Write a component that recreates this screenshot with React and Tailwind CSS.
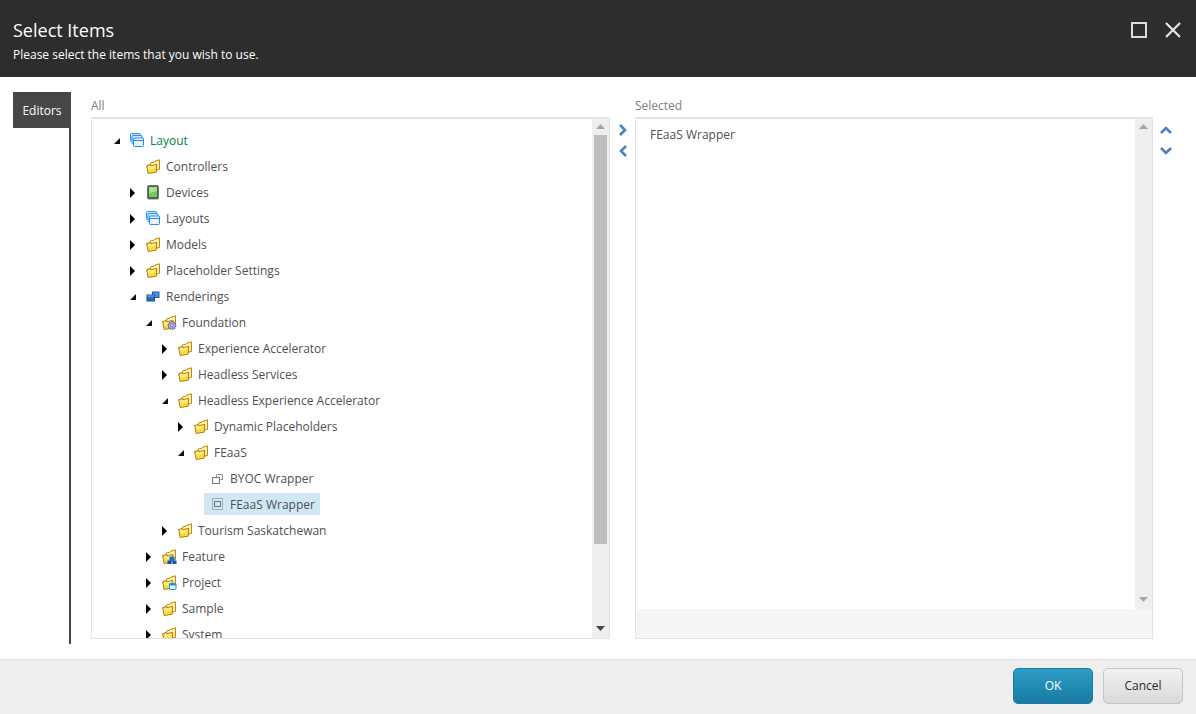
import React from 'react';

// small 16x16 tree icons
function FolderIcon({ children }) {
  return (
    <svg viewBox="0 0 16 16" className="w-4 h-4 shrink-0">
      <path d="M4.5 10V4L8 3.2 9 2 13.5 .8V10.5L5 12Z" fill="#ffec80" stroke="#b98a1e" />
      <path d="M5.5 4.6 12.5 2.4V9.5L5.5 11Z" fill="#fff6b8" />
      <path d="M.6 6.6 4 5.6 5 6.6 10.8 5.4 10.2 13.2 2.2 14.5Z" fill="#ffd93c" stroke="#a97c14" strokeLinejoin="round" />
      <path d="M1.8 7.6 9.6 6.5 9.2 9.5 2.4 10.6Z" fill="#ffeb80" />
      {children}
    </svg>
  );
}

function GearFolderIcon() {
  return (
    <FolderIcon>
      <circle cx="10" cy="10.5" r="3.8" fill="#a9a8d6" stroke="#5f5e9e" strokeWidth="1.1" strokeDasharray="1.6 0.7" />
      <circle cx="10" cy="10.5" r="1.4" fill="#e6e6f5" stroke="#5f5e9e" strokeWidth="0.7" />
    </FolderIcon>
  );
}

function FeatureFolderIcon() {
  return (
    <FolderIcon>
      <rect x="7.5" y="7.5" width="5" height="3.5" fill="#1a6fd0" />
      <rect x="5.5" y="11.5" width="4" height="3.5" fill="#0f52ad" />
      <rect x="10.5" y="11.5" width="4" height="3.5" fill="#0f52ad" />
      <path d="M10 11v1M7.5 11.5h5" stroke="#1a6fd0" />
    </FolderIcon>
  );
}

function ProjectFolderIcon() {
  return (
    <FolderIcon>
      <rect x="7.5" y="8.5" width="6.5" height="6" rx="0.5" fill="#f5f9ff" stroke="#1e8fef" />
      <rect x="7.5" y="8.5" width="6.5" height="2" fill="#1e8fef" />
    </FolderIcon>
  );
}

function LayoutIcon() {
  return (
    <svg viewBox="0 0 16 16" className="w-4 h-4 shrink-0">
      <rect x="0.5" y="0.5" width="10" height="8" rx="1" fill="#cfe8ff" stroke="#1e90f5" />
      <rect x="2" y="2.5" width="10" height="8" rx="1" fill="#cfe8ff" stroke="#1e90f5" />
      <rect x="3.5" y="5" width="10" height="8.5" rx="1" fill="#eef2f8" stroke="#1e90f5" />
      <path d="M4 7.5H13" stroke="#1e90f5" />
    </svg>
  );
}

function DeviceIcon() {
  return (
    <svg viewBox="0 0 16 16" className="w-4 h-4 shrink-0">
      <rect x="1.5" y="0.5" width="11" height="13.5" rx="1" fill="#53575c" stroke="#74787d" />
      <rect x="3" y="2" width="8" height="10" fill="#6fcf50" />
      <path d="M3 2h8v4L3 8Z" fill="#a6e68a" />
    </svg>
  );
}

function RenderingsIcon() {
  return (
    <svg viewBox="0 0 16 16" className="w-4 h-4 shrink-0">
      <rect x="6.5" y="3" width="6.5" height="5.5" fill="#4c8fdc" stroke="#1d5aa8" />
      <rect x="1" y="6" width="7.5" height="6" fill="#2a6cc4" stroke="#174c96" />
      <path d="M1.5 7H8" stroke="#7fb0ea" />
    </svg>
  );
}

function ByocIcon() {
  return (
    <svg viewBox="0 0 16 16" className="w-4 h-4 shrink-0" fill="none" stroke="#777">
      <path d="M6.5 6V3.5H12.5V8.5H9.5" strokeDasharray="1.5 0.5" />
      <rect x="2.5" y="6.5" width="7" height="6" fill="#fff" />
    </svg>
  );
}

function FeaasIcon() {
  return (
    <svg viewBox="0 0 16 16" className="w-4 h-4 shrink-0" fill="none" stroke="#777">
      <rect x="2.5" y="2.5" width="10" height="11" strokeDasharray="1 1" />
      <rect x="4.5" y="5.5" width="6" height="5" />
    </svg>
  );
}

function Toggle({ state }) {
  return (
    <span className="w-[15px] h-[26px] shrink-0 flex items-center justify-center">
      {state === 'open' && (
        <svg viewBox="0 0 6 6" className="w-[6px] h-[6px]"><polygon points="6,0 6,6 0,6" fill="#111" /></svg>
      )}
      {state === 'closed' && (
        <svg viewBox="0 0 5 10" className="w-[5px] h-[10px]"><polygon points="0,0 5,5 0,10" fill="#000" /></svg>
      )}
    </span>
  );
}

function TreeRow({ icon, label, state, active, selected, children }) {
  return (
    <div>
      <div className="flex items-center h-[26px]">
        <Toggle state={state} />
        <div className={`flex items-center h-[22px] pl-[6px] pr-[5px] gap-1 ${selected ? 'bg-[#cfe8f4] mb-[2px]' : ''}`}>
          {icon}
          <span className={`whitespace-nowrap ${selected ? 'pt-[2px]' : ''} ${active ? 'text-[#00843f]' : 'text-[#4f4f4f]'}`}>{label}</span>
        </div>
      </div>
      {children && <div className="pl-4">{children}</div>}
    </div>
  );
}

function Scrollbar({ thumb }) {
  return (
    <div className="w-[17px] shrink-0 bg-[#efefef] flex flex-col items-center">
      <div className="h-4 shrink-0 pb-[2px] flex items-center justify-center">
        <svg viewBox="0 0 9 5" className="w-[9px] h-[5px]"><polygon points="4.5,0 9,5 0,5" fill="#a6a6a6" /></svg>
      </div>
      {thumb ? <div className="w-[13px] h-[409px] bg-[#bdbdbd]" /> : null}
      <div className="flex-1" />
      <div className="h-[18px] shrink-0 pb-px flex items-center justify-center">
        <svg viewBox="0 0 9 5" className="w-[9px] h-[5px]"><polygon points="0,0 9,0 4.5,5" fill={thumb ? '#444' : '#a6a6a6'} /></svg>
      </div>
    </div>
  );
}

function Chevron({ d }) {
  return (
    <svg viewBox="0 0 12 12" className="w-3 h-3">
      <path d={d} fill="none" stroke="#4a82bd" strokeWidth="2.6" />
    </svg>
  );
}

export default function App() {
  return (
    <div className="w-full h-[714px] flex flex-col bg-white text-xs font-['Open_Sans',sans-serif] overflow-hidden">
      {/* Header */}
      <div className="h-[77px] shrink-0 bg-[#2d2d2d] flex justify-between pl-[13px] pr-[15px] pt-[18px]">
        <div>
          <h1 className="text-lg leading-6 text-white">Select Items</h1>
          <p className="mt-[3px] text-xs leading-5 text-white">Please select the items that you wish to use.</p>
        </div>
        <div className="flex gap-[18px] pt-1">
          <div className="w-4 h-4 border-2 border-[#dcdcdc]" />
          <svg viewBox="0 0 16 16" className="w-4 h-4">
            <path d="M1 1 15 15M15 1 1 15" stroke="#e6e6e6" strokeWidth="2.2" />
          </svg>
        </div>
      </div>

      {/* Body */}
      <div className="flex-1 flex min-h-0">
        <div className="ml-[13px] mt-[15px] mb-[15px] w-[58px] shrink-0 border-r-2 border-[#474747]">
          <div className="w-[58px] h-9 pt-px bg-[#474747] text-white flex items-center justify-center">Editors</div>
        </div>

        <div className="ml-5 mt-[15px] w-[519px] shrink-0">
          <div className="h-[25px] leading-[28px] text-[#808080]">All</div>
          <div className="h-[522px] flex border border-t-2 border-[#e3e3e3] overflow-hidden">
            <div className="flex-1 pl-[17px] pt-[9px] overflow-hidden">
              <TreeRow icon={<LayoutIcon />} label="Layout" state="open" active>
                <TreeRow icon={<FolderIcon />} label="Controllers" />
                <TreeRow icon={<DeviceIcon />} label="Devices" state="closed" />
                <TreeRow icon={<LayoutIcon />} label="Layouts" state="closed" />
                <TreeRow icon={<FolderIcon />} label="Models" state="closed" />
                <TreeRow icon={<FolderIcon />} label="Placeholder Settings" state="closed" />
                <TreeRow icon={<RenderingsIcon />} label="Renderings" state="open">
                  <TreeRow icon={<GearFolderIcon />} label="Foundation" state="open">
                    <TreeRow icon={<FolderIcon />} label="Experience Accelerator" state="closed" />
                    <TreeRow icon={<FolderIcon />} label="Headless Services" state="closed" />
                    <TreeRow icon={<FolderIcon />} label="Headless Experience Accelerator" state="open">
                      <TreeRow icon={<FolderIcon />} label="Dynamic Placeholders" state="closed" />
                      <TreeRow icon={<FolderIcon />} label="FEaaS" state="open">
                        <TreeRow icon={<ByocIcon />} label="BYOC Wrapper" />
                        <TreeRow icon={<FeaasIcon />} label="FEaaS Wrapper" selected />
                      </TreeRow>
                    </TreeRow>
                    <TreeRow icon={<FolderIcon />} label="Tourism Saskatchewan" state="closed" />
                  </TreeRow>
                  <TreeRow icon={<FeatureFolderIcon />} label="Feature" state="closed" />
                  <TreeRow icon={<ProjectFolderIcon />} label="Project" state="closed" />
                  <TreeRow icon={<FolderIcon />} label="Sample" state="closed" />
                  <TreeRow icon={<FolderIcon />} label="System" state="closed" />
                </TreeRow>
              </TreeRow>
            </div>
            <Scrollbar thumb />
          </div>
        </div>

        <div className="w-[25px] shrink-0 pt-[47px] pl-px flex flex-col items-center gap-[9px]">
          <Chevron d="M3 1 8 6 3 11" />
          <Chevron d="M9 1 4 6 9 11" />
        </div>

        <div className="mt-[15px] w-[518px] shrink-0">
          <div className="h-[25px] leading-[28px] text-[#808080]">Selected</div>
          <div className="h-[522px] flex flex-col border border-t-2 border-[#e3e3e3] overflow-hidden">
            <div className="h-[490px] shrink-0 flex">
              <div className="flex-1 pl-[14px] pt-2 text-[#4f4f4f]">FEaaS Wrapper</div>
              <Scrollbar />
            </div>
            <div className="flex-1 bg-[#f5f5f5]" />
          </div>
        </div>

        <div className="w-[43px] pt-[47px] pl-[7px] flex flex-col gap-[9px]">
          <Chevron d="M1 9 6 4 11 9" />
          <Chevron d="M1 3 6 8 11 3" />
        </div>
      </div>

      {/* Footer */}
      <div className="h-[55px] shrink-0 bg-[#eeeeee] border-t border-[#dcdcdc] flex justify-end items-start pt-2 pr-[13px] gap-[10px]">
        <button className="w-20 h-9 rounded-[5px] border border-[#1c7ba6] bg-gradient-to-b from-[#2c9cc6] to-[#1a7aa3] text-white text-xs">OK</button>
        <button className="w-20 h-9 rounded-[5px] border border-[#c4c4c4] bg-gradient-to-b from-[#f2f2f2] to-[#d9d9d9] text-[#2b2b2b] text-xs">Cancel</button>
      </div>
    </div>
  );
}
